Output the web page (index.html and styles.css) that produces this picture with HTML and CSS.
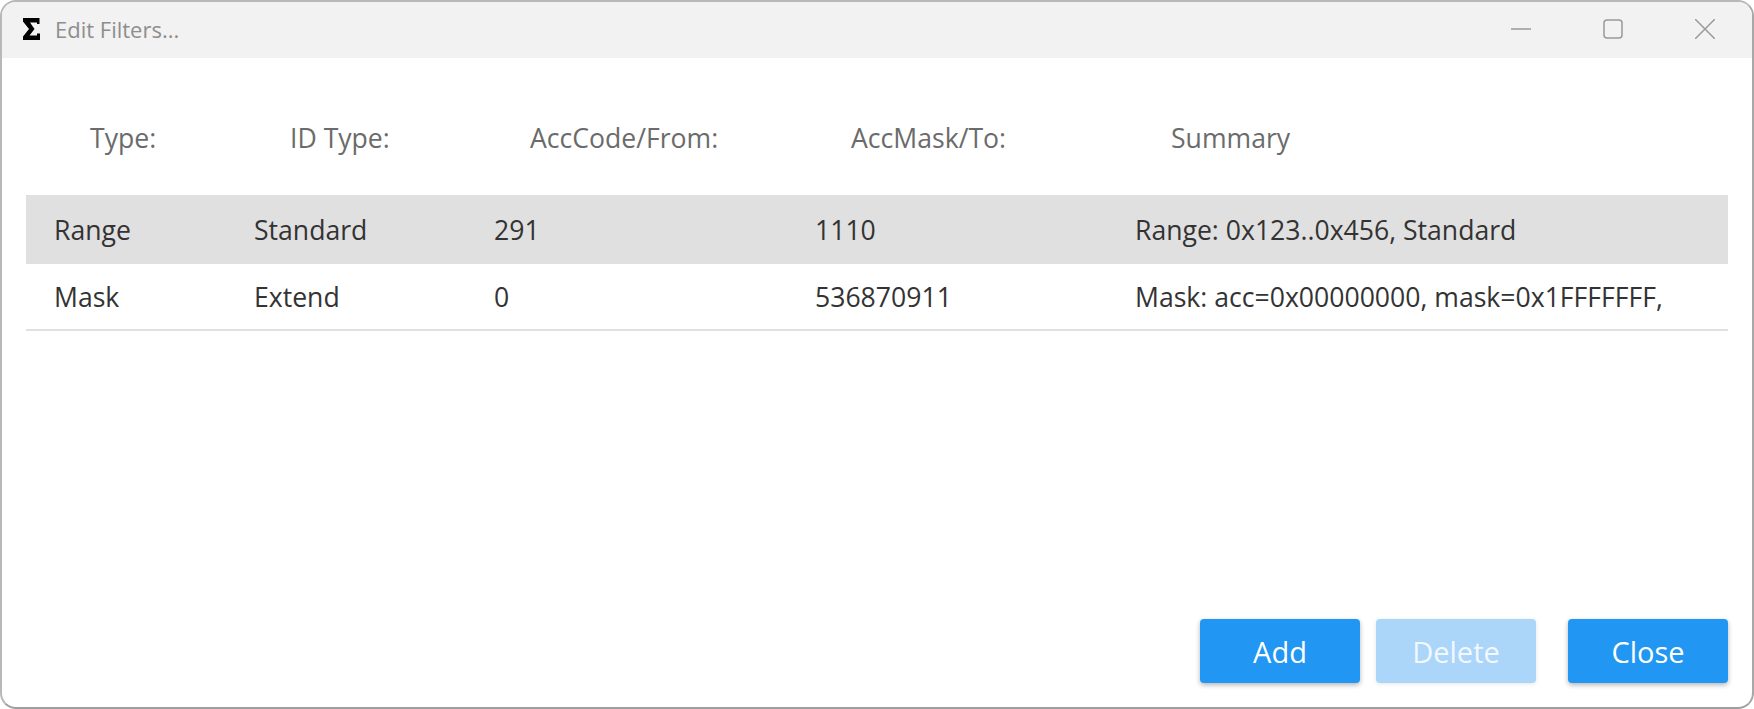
FILE: index.html
```html
<!DOCTYPE html>
<html lang="en">
<head>
<meta charset="utf-8">
<title>Edit Filters...</title>
<link rel="stylesheet" href="styles.css">
</head>
<body>
<div class="window">
  <header class="titlebar">
    <svg class="app-icon" width="17" height="22" viewBox="0 0 17 22"><path d="M0 0H16.5V6H14V4.5H7L11.5 11L6.5 17.5H14V15.5H17V22H0V18.5L6 11L0 3.5Z" fill="#000"/></svg>
    <span class="title">Edit Filters...</span>
    <div class="controls">
      <svg width="20" height="20" viewBox="0 0 20 20"><path d="M0 10H20" stroke="#999" stroke-width="1.5"/></svg>
      <svg width="20" height="20" viewBox="0 0 20 20"><rect x="1" y="1" width="18" height="18" rx="3" fill="none" stroke="#999" stroke-width="1.5"/></svg>
      <svg width="20" height="20" viewBox="0 0 20 20"><path d="M0 0L20 20M20 0L0 20" stroke="#999" stroke-width="1.5"/></svg>
    </div>
  </header>
  <main class="content">
    <div class="grid heading">
      <span>Type:</span><span>ID Type:</span><span>AccCode/From:</span><span>AccMask/To:</span><span>Summary</span>
    </div>
    <div class="grid row selected">
      <span>Range</span><span>Standard</span><span>291</span><span>1110</span><span>Range: 0x123..0x456, Standard</span>
    </div>
    <div class="grid row">
      <span>Mask</span><span>Extend</span><span>0</span><span>536870911</span><span>Mask: acc=0x00000000, mask=0x1FFFFFFF,</span>
    </div>
    <div class="actions">
      <button class="btn">Add</button>
      <button class="btn disabled">Delete</button>
      <button class="btn close">Close</button>
    </div>
  </main>
</div>
</body>
</html>
```
FILE: styles.css
```css
* { box-sizing: border-box; }
html, body { margin: 0; height: 100%; background: #fff; }
body { font-family: "Open Sans", "Noto Sans", sans-serif; overflow: hidden; }
.window {
  width: 1754px; height: 709px; display: flex; flex-direction: column;
  border: 2px solid #b8b8b8; border-bottom-color: #9f9f9f; border-right-color: #a8a8a8;
  border-radius: 16px; background: #fff; overflow: hidden;
}
.titlebar { height: 56px; flex: none; background: #f2f2f2; display: flex; align-items: center; padding: 0 0 2px 21px; }
.app-icon { flex: none; }
.title { margin-left: 15px; font-size: 22px; color: #8e8e8e; }
.controls { margin-left: auto; display: flex; gap: 72px; padding-right: 37px; }
.content { flex: 1; display: flex; flex-direction: column; padding: 0 24px 24px; }
.grid { display: grid; grid-template-columns: 200px 240px 321px 320px 1fr; padding-left: 28px; font-size: 26.6px; }
.heading { color: #6b6b6b; padding-left: 64px; height: 137px; padding-top: 62px; }
.row { height: 67px; align-items: center; color: #333; border-bottom: 2px solid #e0e0e0; }
.selected { background: #e0e0e0; border-bottom: 0; height: 69px; }
.actions { margin-top: auto; display: flex; justify-content: flex-end; }
.btn { width: 160px; height: 64px; border: 0; border-radius: 4px; background: #2196f3; color: #fff; font: inherit; font-size: 29px; box-shadow: 0 2px 5px rgba(0,0,0,.3); padding: 0; }
.disabled { background: #acd6f9; color: rgba(255,255,255,.85); margin-left: 16px; box-shadow: 0 1px 4px rgba(0,0,0,.1); }
.close { margin-left: 32px; }
```
